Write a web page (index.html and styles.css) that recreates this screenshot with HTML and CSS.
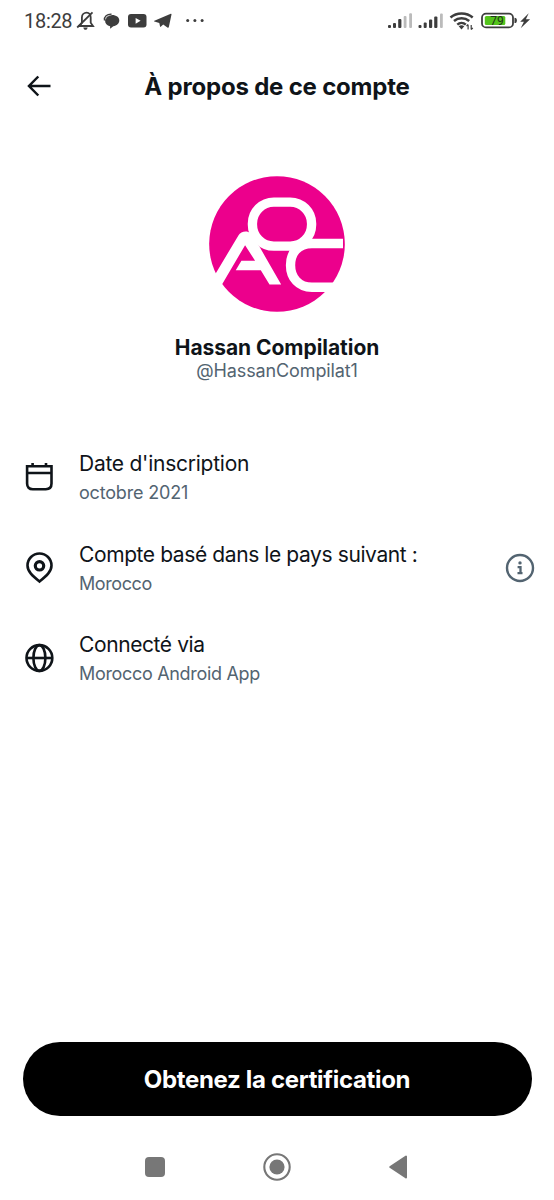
FILE: index.html
```html
<!DOCTYPE html>
<html lang="fr">
<head>
<meta charset="utf-8">
<title>À propos de ce compte</title>
<link rel="stylesheet" href="styles.css">
</head>
<body>
<div class="screen">
  <div class="status">
    <span class="clock">18:28</span>
    <svg class="status-left" width="134" height="40" viewBox="0 0 134 40" fill="#3d3d3d">
      <g fill="none" stroke="#3d3d3d" stroke-width="1.800"><path d="M6 26h15l-2.300-3.200v-5.300c0-3-1.500-4.800-4-4.800s-4.800 1.800-4.800 4.800v5.300L7.500 26"/><path d="M5.200 27.500 20.500 12.300"/></g>
      <path d="M11.300 27.500h4.400c-.4 1.600-1.100 2.300-2.200 2.300s-1.900-.7-2.200-2.300z"/>
      <path d="M40 15c4.300 0 7.300 2.300 7.300 5.500 0 3-2.500 5.200-6 5.800l-3.200 2.500v-2.500c-3.200-.6-5-2.700-5-5.500 0-3.300 2.700-5.800 6.900-5.800z"/>
      <path d="M32.500 20.500c-.6-4 2.500-6.500 7-6.300" fill="none" stroke="#3d3d3d" stroke-width="1.400"/>
      <path d="M33.500 19.300c.8-2.700 2.800-4 6-4.100" fill="none" stroke="#ddd" stroke-width=".6"/>
      <rect x="56" y="14" width="18.500" height="13.500" rx="3"/><path d="m63.600 17.900 5 2.900-5 2.900z" fill="#fff"/>
      <path d="m82.400 20.700 16.400-6.900c.5-.2.800.1.700.7l-2.600 12.300c-.2.900-.8 1.100-1.500.6l-4.200-3-2.200 2.200c-.5.500-.9.300-1-.4l-.7-3.200-4.900-1.500c-.7-.2-.7-.6 0-.8zm5.500 1.900 8.200-5.700-6.600 6.600-.4 2.300z"/>
      <circle cx="115.700" cy="20.500" r="1.500"/><circle cx="122.900" cy="20.500" r="1.500"/><circle cx="130.100" cy="20.500" r="1.500"/>
    </svg>
    <svg class="status-right" width="145" height="40" viewBox="387 0 145 40" fill="#3d3d3d">
      <g><rect x="388" y="25" width="3" height="3" rx="1"/><rect x="393" y="23" width="3" height="5" rx="1"/><rect x="398.200" y="19" width="3.200" height="9" rx="1"/><rect x="403.700" y="16" width="2.800" height="12" rx="1" fill="#bbb"/><rect x="409.200" y="13.200" width="2.800" height="14.800" rx="1" fill="#bbb"/>
      <rect x="418.500" y="25" width="3" height="3" rx="1"/><rect x="423.700" y="22.500" width="3" height="5.500" rx="1"/><rect x="429" y="19.500" width="3.200" height="8.500" rx="1"/><rect x="434.200" y="16.500" width="3.200" height="11.500" rx="1"/><rect x="440" y="13.500" width="2.800" height="14.500" rx="1" fill="#bbb"/></g>
      <g fill="none" stroke="#3d3d3d" stroke-width="2.500"><path d="M450.500 17.500c6.200-5.400 16-5.400 22.200 0"/><path d="M454 21c4.300-3.700 10.800-3.700 15.200 0"/><path d="M457.300 24.600c2.400-2.100 6.100-2.100 8.500 0"/></g>
      <path d="m461.500 29.500-2.800-3.200c1.700-1.300 3.900-1.300 5.600 0z"/>
      <path d="M468.100 29.500v-4.700M466.500 26.200l1.600-1.800M471.200 25v4.600M472.800 27.800l-1.600 1.800" stroke="#3d3d3d" stroke-width="1.200"/>
      <rect x="482" y="13.600" width="31" height="13.800" rx="4" fill="none" stroke="#3d3d3d" stroke-width="1.800"/>
      <rect x="484.800" y="16" width="20.500" height="9" rx="1.500" fill="#54c41c"/>
      <path d="M514.500 17.800c1.800 0 2.400 1 2.400 2.700s-.6 2.600-2.400 2.600z"/>
      <text x="497" y="24.500" class="charge">79</text>
      <path d="m528.700 13.200-8.500 8.600h3.700l-3.200 6.400 9.400-9h-4.200z"/>
    </svg>
  </div>

  <header class="bar">
    <svg class="back" width="24" height="22" viewBox="0 0 24 22" fill="none" stroke="#0f1419" stroke-width="2.500"><path d="M11.300 1.500 2 11l9.300 9.500M2.500 11h21"/></svg>
    <h1 class="title">À propos de ce compte</h1>
  </header>

  <section class="profile">
    <svg class="avatar" width="136" height="136" viewBox="42 33 407 407">
      <circle cx="245.500" cy="236.500" r="203" fill="#ec008c"/>
      <g fill="none" stroke="#fff" stroke-width="28">
        <rect x="172" y="111" width="177" height="132" rx="64"/>
        <path d="M443 235H350C308 235 286 263 286 300s24 66 64 66h80"/>
      </g>
      <path d="M54 338 130 211c7-12 26-16 36-6l29 43 63 110h-35l-26-43h-75l17-28h41l-30-47-70 119-15 20z" fill="#fff"/>
    </svg>
    <div class="name">Hassan Compilation</div>
    <div class="handle">@HassanCompilat1</div>
  </section>

  <main class="facts">
    <div class="fact">
      <svg class="icon" width="30" height="30" viewBox="0 0 30 30" fill="none" stroke="#0f1419" stroke-width="2.600"><path d="M3.100 4.200h24.400v17.300c0 3.700-2 5.700-5.700 5.700h-13c-3.700 0-5.700-2-5.700-5.700zM3.100 11h24.400M8.600 1v4M22 1v4"/></svg>
      <div class="copy"><div class="label date">Date d'inscription</div><div class="value month">octobre 2021</div></div>
    </div>
    <div class="fact">
      <svg class="icon" width="30" height="32" viewBox="0 0 30 32" fill="none" stroke="#0f1419" stroke-width="2.600"><path d="M15.500 29.500C8.500 24 3.500 19.500 3.500 13.500a12 12 0 0 1 24 0c0 6-5 10.500-12 16z"/><circle cx="15.500" cy="13.800" r="4.200" stroke-width="3.200"/></svg>
      <div class="copy"><div class="label based">Compte basé dans le pays suivant :</div><div class="value country">Morocco</div></div>
      <svg class="info" width="30" height="30" viewBox="0 0 30 30"><circle cx="15" cy="15" r="13" fill="none" stroke="#536471" stroke-width="2.400"/><circle cx="15" cy="9.900" r="1.700" fill="#536471"/><path d="M12.600 14.100h2.900v6M12.500 20.100h5" fill="none" stroke="#536471" stroke-width="2.300"/></svg>
    </div>
    <div class="fact">
      <svg class="icon" width="30" height="30" viewBox="0 0 30 30" fill="none" stroke="#0f1419" stroke-width="2.600"><circle cx="15.400" cy="15" r="12.900"/><ellipse cx="15.400" cy="15" rx="6" ry="12.900"/><path d="M2.400 15h26"/></svg>
      <div class="copy"><div class="label via">Connecté via</div><div class="value app">Morocco Android App</div></div>
    </div>
  </main>

  <button class="cta">Obtenez la certification</button>

  <nav class="nav">
    <svg width="20" height="20" viewBox="0 0 20 20"><rect width="20" height="20" rx="4" fill="#777"/></svg>
    <svg width="28" height="28" viewBox="0 0 28 28"><circle cx="14" cy="14" r="12.700" fill="none" stroke="#777" stroke-width="2.100"/><circle cx="14" cy="14" r="7.600" fill="#777"/></svg>
    <svg width="20" height="26" viewBox="0 0 20 26"><path d="M2.200 13 18 2.500v21z" fill="#777" stroke="#777" stroke-width="2" stroke-linejoin="round"/></svg>
  </nav>
</div>
</body>
</html>
```
FILE: styles.css
```css
* { box-sizing: border-box; }
body { margin: 0; background: #fff; color: #0f1419; font-family: Inter, "Liberation Sans", sans-serif; }
.screen { width: 554px; height: 1200px; display: flex; flex-direction: column; overflow: hidden; }
.status { height: 41px; display: flex; padding: 0 22px 0 24px; }
.clock { width: 48px; font: 20px/43px Roboto, sans-serif; letter-spacing: -.3px; color: #3d3d3d; white-space: nowrap; }
.status-right { margin-left: auto; }
.charge { font: 400 12px Roboto, sans-serif; text-anchor: middle; fill: #20351a; }
.bar { height: 90px; display: grid; grid-template-columns: 66px 1fr 66px; align-items: center; }
.back { margin-left: 27px; }
.title { margin: 0; padding-top: 2px; font-size: 24px; line-height: 32px; font-weight: 700; letter-spacing: -.2px; text-align: center; white-space: nowrap; }
.profile { display: flex; flex-direction: column; align-items: center; padding-top: 45px; }
.avatar { display: block; }
.name { margin-top: 23px; font-size: 21px; line-height: 25px; font-weight: 700; letter-spacing: -.05px; }
.handle { font-size: 18px; line-height: 22px; letter-spacing: -.12px; color: #536471; }
.facts { display: flex; flex-direction: column; gap: 28px; padding: 64px 19px 0 24px; }
.fact { height: 62.500px; display: grid; grid-template-columns: 55px 1fr 30px; align-items: center; }
.label { font-size: 21px; line-height: 32px; white-space: nowrap; }
.value { font-size: 18px; line-height: 26px; color: #536471; }
.date { letter-spacing: -.25px; }
.based { letter-spacing: -.4px; }
.via { letter-spacing: -.4px; }
.month { letter-spacing: -.18px; }
.country { letter-spacing: -.4px; }
.app { letter-spacing: -.32px; }
.cta { margin: auto 22.500px 0; height: 74px; flex-shrink: 0; padding: 2px 0 0; border: 0; border-radius: 37px; background: #000; color: #fff; font: 700 24px/32px Inter, sans-serif; letter-spacing: -.33px; }
.nav { height: 84px; display: flex; align-items: center; justify-content: space-between; padding: 17px 146px 0 145px; }
```
